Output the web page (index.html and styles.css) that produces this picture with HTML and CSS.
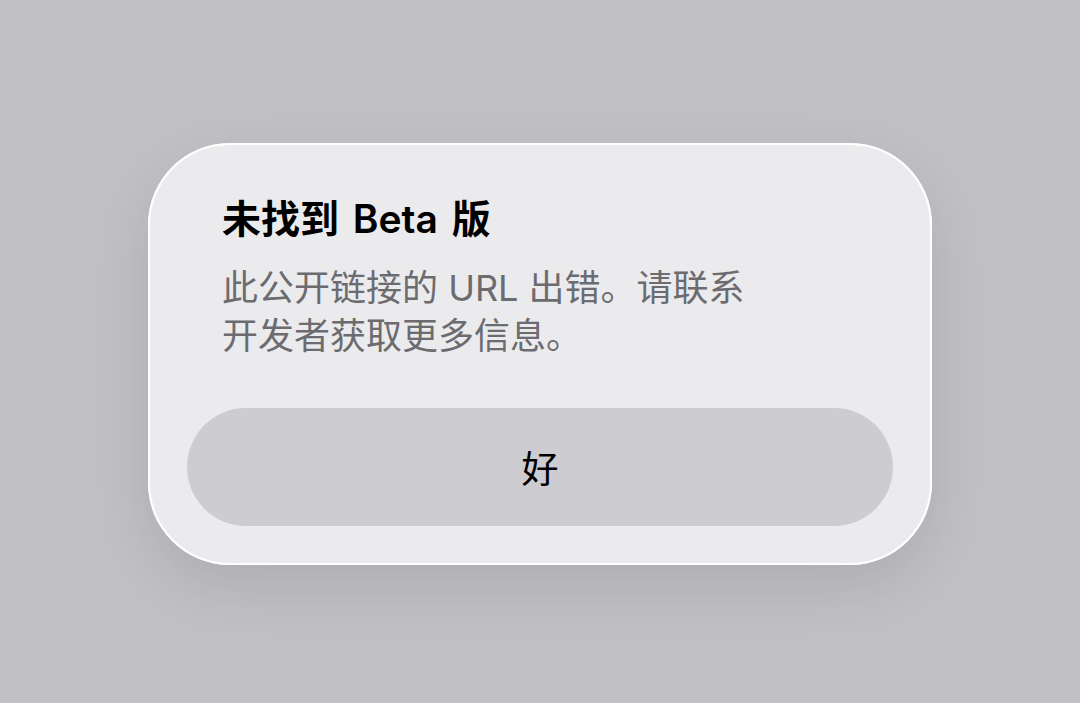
FILE: index.html
```html
<!DOCTYPE html>
<html lang="zh-CN">
<head>
<meta charset="utf-8">
<link rel="stylesheet" href="styles.css">
</head>
<body>
<div class="stage">
  <div class="alert">
    <div class="title">未找到 Beta 版</div>
    <div class="message">此公开链接的 URL 出错。请联系<br>开发者获取更多信息。</div>
    <div class="button">好</div>
  </div>
</div>
</body>
</html>
```
FILE: styles.css
```css
html, body {
  margin: 0;
  padding: 0;
  height: 100%;
}
body {
  background: #c1c0c5;
  font-family: Inter, "Noto Sans CJK SC", sans-serif;
}
.stage {
  display: flex;
  justify-content: center;
  padding-top: 143px;
}
.alert {
  width: 784px;
  height: 422px;
  box-sizing: border-box;
  background: #ebebee;
  border-radius: 82px;
  box-shadow: inset 0 0 0 2px #ffffff, 0 22px 60px rgba(0, 0, 0, 0.10);
  padding: 52px 39px 39px;
  display: flex;
  flex-direction: column;
}
.title {
  padding: 0 35px;
  font-size: 39px;
  line-height: 48px;
  font-weight: 600;
  word-spacing: 4px;
  color: #000;
}
.message {
  padding: 0 35px;
  margin-top: 21px;
  font-size: 36px;
  line-height: 48px;
  color: #6c6c70;
}
.button {
  margin-top: 48px;
  height: 118px;
  border-radius: 59px;
  background: #cdccd1;
  display: flex;
  align-items: center;
  justify-content: center;
  font-size: 37px;
  color: #000;
}
```
